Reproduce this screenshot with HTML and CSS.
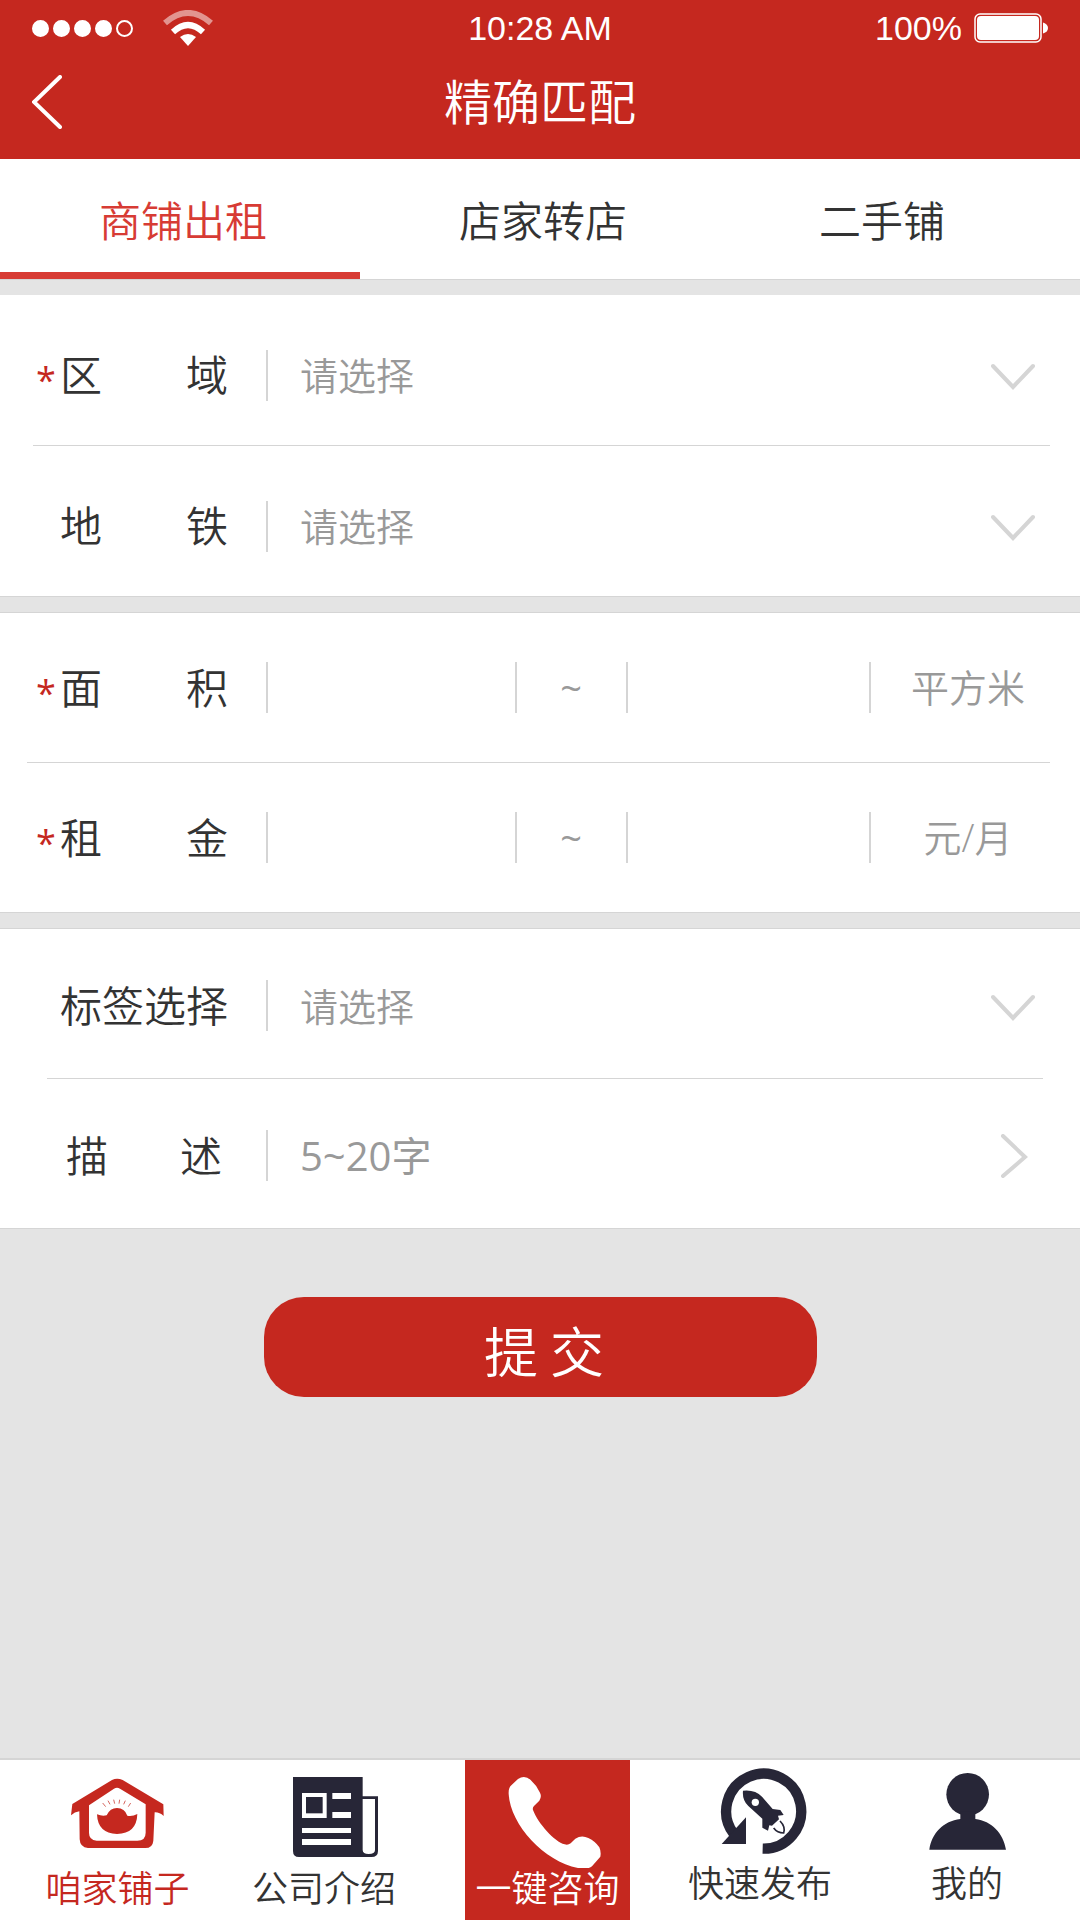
FILE: index.html
```html
<!DOCTYPE html>
<html lang="zh-CN">
<head>
  <meta charset="UTF-8">
  <meta name="viewport" content="width=device-width, initial-scale=1.0">
  <title>精确匹配</title>
  <link rel="stylesheet" href="styles.css">
</head>
<body>

<header class="header">
  <div class="status">
    <div class="signal">
      <span class="dot"></span>
      <span class="dot"></span>
      <span class="dot"></span>
      <span class="dot"></span>
      <span class="dot empty"></span>
      <svg class="wifi" viewBox="0 0 50 36" fill="none" stroke="#fff">
        <path d="M2 13Q25-7 48 13" stroke-width="6" opacity=".5"/>
        <path d="M10 22Q25 8 40 22" stroke-width="6"/>
        <path d="M17 27Q25 21 33 27L25 36Z" fill="#fff" stroke="none"/>
      </svg>
    </div>
    <span>10:28 AM</span>
    <div class="power">
      <span>100%</span>
      <svg class="battery" viewBox="0 0 74 30">
        <rect x="1" y="1" width="66" height="28" rx="5" fill="none" stroke="#fff" stroke-width="1.5"/>
        <rect x="3" y="3" width="62" height="24" rx="4" fill="#fff"/>
        <path d="M69 9.500Q74 11 74 15T69 20.500Z" fill="#fff"/>
      </svg>
    </div>
  </div>
  <div class="title-bar">
    <button class="back" type="button" aria-label="返回">
      <svg viewBox="0 0 30 54"><path d="M28 2L2 27L28 52"/></svg>
    </button>
    <h1>精确匹配</h1>
  </div>
</header>

<nav class="tabs">
  <a class="active" href="#rent">商铺出租</a>
  <a href="#transfer">店家转店</a>
  <a href="#second">二手铺</a>
</nav>

<main>
  <form>
    <section class="group group-place">
      <div class="row">
        <span class="star">*</span>
        <label for="area">区域</label>
        <select id="area"><option>请选择</option></select>
        <svg class="arrow" viewBox="0 0 44 44"><path d="M2 13L22 34L42 13"/></svg>
      </div>
      <hr>
      <div class="row">
        <span class="star"></span>
        <label for="metro">地铁</label>
        <select id="metro"><option>请选择</option></select>
        <svg class="arrow" viewBox="0 0 44 44"><path d="M2 13L22 34L42 13"/></svg>
      </div>
    </section>

    <section class="group group-range">
      <div class="row">
        <span class="star">*</span>
        <label for="size-min">面积</label>
        <input class="min" id="size-min" type="text">
        <span class="tilde">~</span>
        <input type="text" aria-label="最大面积">
        <span class="unit">平方米</span>
      </div>
      <hr>
      <div class="row">
        <span class="star">*</span>
        <label for="rent-min">租金</label>
        <input class="min" id="rent-min" type="text">
        <span class="tilde">~</span>
        <input type="text" aria-label="最高租金">
        <span class="unit">元/月</span>
      </div>
    </section>

    <section class="group group-more">
      <div class="row">
        <span class="star"></span>
        <label for="tag">标签选择</label>
        <select id="tag"><option>请选择</option></select>
        <svg class="arrow" viewBox="0 0 44 44"><path d="M2 13L22 34L42 13"/></svg>
      </div>
      <hr>
      <div class="row">
        <span class="star"></span>
        <label class="short" for="desc">描述</label>
        <input id="desc" type="text" placeholder="5~20字">
        <svg class="arrow" viewBox="0 0 44 44"><path d="M12 2L34 23L12 42"/></svg>
      </div>
    </section>

    <button class="submit" type="submit">提 交</button>
  </form>
</main>

<nav class="bottom-nav">
  <a class="current" href="#home">
    <svg viewBox="174 66 360 288">
      <path fill="currentColor" fill-rule="evenodd" d="M336 90Q351 82 368 90L490 163L491 198Q478 186 464 187L460 272Q458 294 436 294H264Q240 292 239 268L238 184Q224 186 213 196L217 162ZM342 116L267 166V246Q266 270 290 272H412Q437 272 437 248V163L360 116Q351 111 342 116Z"/>
      <path fill="currentColor" d="M291 193Q307 200 320 196Q330 174 351 174Q374 174 382 197Q397 200 412 192Q410 251 351 252Q293 250 291 193Z"/>
      <path stroke="currentColor" stroke-width="3" opacity=".7" d="M308 159L317 170M324 152L330 163M341 149L344 161M359 149L357 161M376 152L371 163M392 159L385 170"/>
    </svg>
    <span>咱家铺子</span>
  </a>
  <a href="#about">
    <svg viewBox="792 66 360 288">
      <path fill="#272637" d="M879 81H1088V139H1134V303Q1134 321 1114 321H897Q879 321 879 303Z"/>
      <path fill="#fff" d="M1088 147H1125V300Q1125 312 1106 312Q1088 312 1088 300ZM906 129H980V204H906ZM997 129H1053V147H997ZM997 186H1053V204H997ZM906 234H1053V249H906ZM906 267H1053V285H906Z"/>
      <path fill="#272637" d="M918 141H968V190H918Z"/>
    </svg>
    <span>公司介绍</span>
  </a>
  <a class="call" href="#call">
    <svg viewBox="262 66 360 288">
      <path fill="#fff" d="M324 132Q323 114 332 106L352 87Q372 74 390 90Q408 106 418 128Q424 140 416 152L400 168Q395 173 397 180C412 220 462 276 492 283Q502 286 510 280L524 266Q543 254 563 264Q584 274 596 292Q602 305 599 320L574 349Q564 357 545 356C440 344 330 230 324 132Z"/>
    </svg>
    <span>一键咨询</span>
  </a>
  <a class="high" href="#publish">
    <svg viewBox="60 51 360 288">
      <path fill="none" stroke="#272637" stroke-width="31" d="M248 296A112.500 112.500 0 1 0 161 251"/>
      <path fill="#272637" d="M198 202V282H125Z"/>
      <path fill="#272637" d="M189 122Q225 118 246 140L278 177L301 180L311 195L294 197L297 208L276 227L268 226L264 242L247 233V206L205 168Q186 150 189 122Z"/>
      <circle cx="226" cy="157" r="11" fill="#fff"/>
      <path fill="none" stroke="#272637" stroke-width="5" d="M300 213Q317 230 311 249Q292 249 281 234"/>
    </svg>
    <span>快速发布</span>
  </a>
  <a class="high" href="#mine">
    <svg viewBox="681 51 360 288">
      <circle cx="863" cy="133" r="64" fill="#272637"/>
      <path fill="#272637" d="M841 185H886V207C935 213 970 250 978 299H748C755 250 790 213 841 207Z"/>
    </svg>
    <span>我的</span>
  </a>
</nav>

</body>
</html>
```
FILE: styles.css
```css
* {
  box-sizing: border-box;
}

body {
  margin: 0;
  min-height: 100vh;
  display: flex;
  flex-direction: column;
  background: #e4e4e4;
  color: #333;
  font-family: "Open Sans", "Noto Sans CJK SC", sans-serif;
  font-weight: 350;
}

a {
  color: inherit;
  text-decoration: none;
}

button,
input,
select {
  margin: 0;
  padding: 0;
  border: none;
  background: none;
  font: inherit;
}

/* header */
.header {
  background: #c5281f;
  color: #fff;
}

.status {
  display: grid;
  grid-template-columns: 1fr auto 1fr;
  align-items: center;
  height: 56px;
  padding: 0 32px;
  font-family: "Liberation Sans", sans-serif;
  font-size: 34px;
}

.signal,
.power {
  display: flex;
  align-items: center;
}

.signal {
  gap: 4px;
}

.power {
  justify-content: flex-end;
  gap: 12px;
}

.dot {
  width: 17px;
  height: 17px;
  border: 2px solid #fff;
  border-radius: 50%;
  background: #fff;
}

.dot.empty {
  background: none;
}

.wifi {
  width: 50px;
  height: 36px;
  margin-left: 26px;
}

.battery {
  width: 74px;
  height: 30px;
}

.title-bar {
  display: grid;
  grid-template-columns: 1fr auto 1fr;
  align-items: center;
  height: 103px;
  padding: 0 32px 12px;
}

.title-bar h1 {
  margin: 0;
  font-size: 48px;
  font-weight: 350;
  line-height: 66px;
}

.back {
  width: 30px;
  height: 54px;
}

.back svg {
  display: block;
  fill: none;
  stroke: #fff;
  stroke-width: 4;
  stroke-linecap: round;
}

/* tabs */
.tabs {
  display: grid;
  grid-template-columns: repeat(3, 1fr);
  background: #fff;
  border-bottom: 1px solid #d5d5d5;
  margin-bottom: 15px;
}

.tabs a {
  height: 120px;
  padding-left: 99px;
  font-size: 42px;
  line-height: 124px;
}

.tabs .active {
  color: #d73b34;
  box-shadow: inset 0 -7px #d73b34;
}

/* form */
.group {
  background: #fff;
  border-bottom: 1px solid #d5d5d5;
  margin-bottom: 15px;
}

.group-range,
.group-more {
  border-top: 1px solid #d5d5d5;
}

.group hr {
  height: 1px;
  margin: 0 30px 0 33px;
  border: none;
  background: #d5d5d5;
}

.group-range hr {
  margin-left: 27px;
}

.group-more hr {
  margin: 0 37px 0 47px;
}

.row {
  display: flex;
  align-items: center;
  height: 149px;
  padding: 4px 45px 0 36px;
}

.group-place .row {
  height: 150px;
  padding-top: 10px;
}

.group-range .row {
  padding-top: 0;
  padding-right: 15px;
}

.star {
  width: 24px;
  padding-top: 10px;
  color: #c5281f;
  font-size: 36px;
  font-weight: 400;
  line-height: 40px;
}

.row label {
  width: 168px;
  margin-right: 38px;
  font-size: 42px;
  line-height: 50px;
  text-align-last: justify;
}

.row .short {
  padding: 0 6px;
}

.row select,
.row input {
  flex: 240;
  min-width: 0;
  height: 51px;
  padding-left: 32px;
  border-left: 2px solid #d5d5d5;
  border-radius: 0;
  color: #999;
  font-size: 38px;
  line-height: 50px;
  appearance: none;
}

.row input {
  font-size: 40px;
  font-weight: 400;
}

.row .min {
  flex: 246;
}

.row input::placeholder {
  color: #999;
  opacity: 1;
}

.tilde,
.unit {
  height: 51px;
  border-left: 2px solid #d5d5d5;
  color: #999;
  font-size: 38px;
  line-height: 50px;
  text-align: center;
}

.tilde {
  width: 111px;
  font-weight: 400;
}

.unit {
  width: 196px;
}

.arrow {
  width: 44px;
  height: 44px;
  fill: none;
  stroke: #d5d5d5;
  stroke-width: 4;
  stroke-linecap: round;
}

.submit {
  display: block;
  width: 553px;
  max-width: 90%;
  height: 100px;
  margin: 68px auto 40px;
  padding: 6px 0 0 8px;
  border-radius: 40px;
  background: #c5281f;
  color: #fff;
  font-family: "Noto Sans CJK SC", sans-serif;
  font-size: 54px;
  line-height: 80px;
}

/* bottom nav */
.bottom-nav {
  display: grid;
  grid-template-columns: 235fr 178fr 217px 260fr 154fr;
  height: 162px;
  margin-top: auto;
  padding-right: 36px;
  border-top: 2px solid #d5d5d5;
  background: #fff;
  font-size: 36px;
  line-height: 42px;
}

.bottom-nav a {
  display: flex;
  flex-direction: column;
  align-items: center;
  padding-top: 12px;
  white-space: nowrap;
}

.bottom-nav .high {
  padding-top: 7px;
}

.bottom-nav svg {
  width: 120px;
  height: 96px;
}

.bottom-nav .current {
  color: #c5281f;
}

.bottom-nav .call {
  justify-self: end;
  width: 165px;
  background: #c5281f;
  color: #fff;
}
```
